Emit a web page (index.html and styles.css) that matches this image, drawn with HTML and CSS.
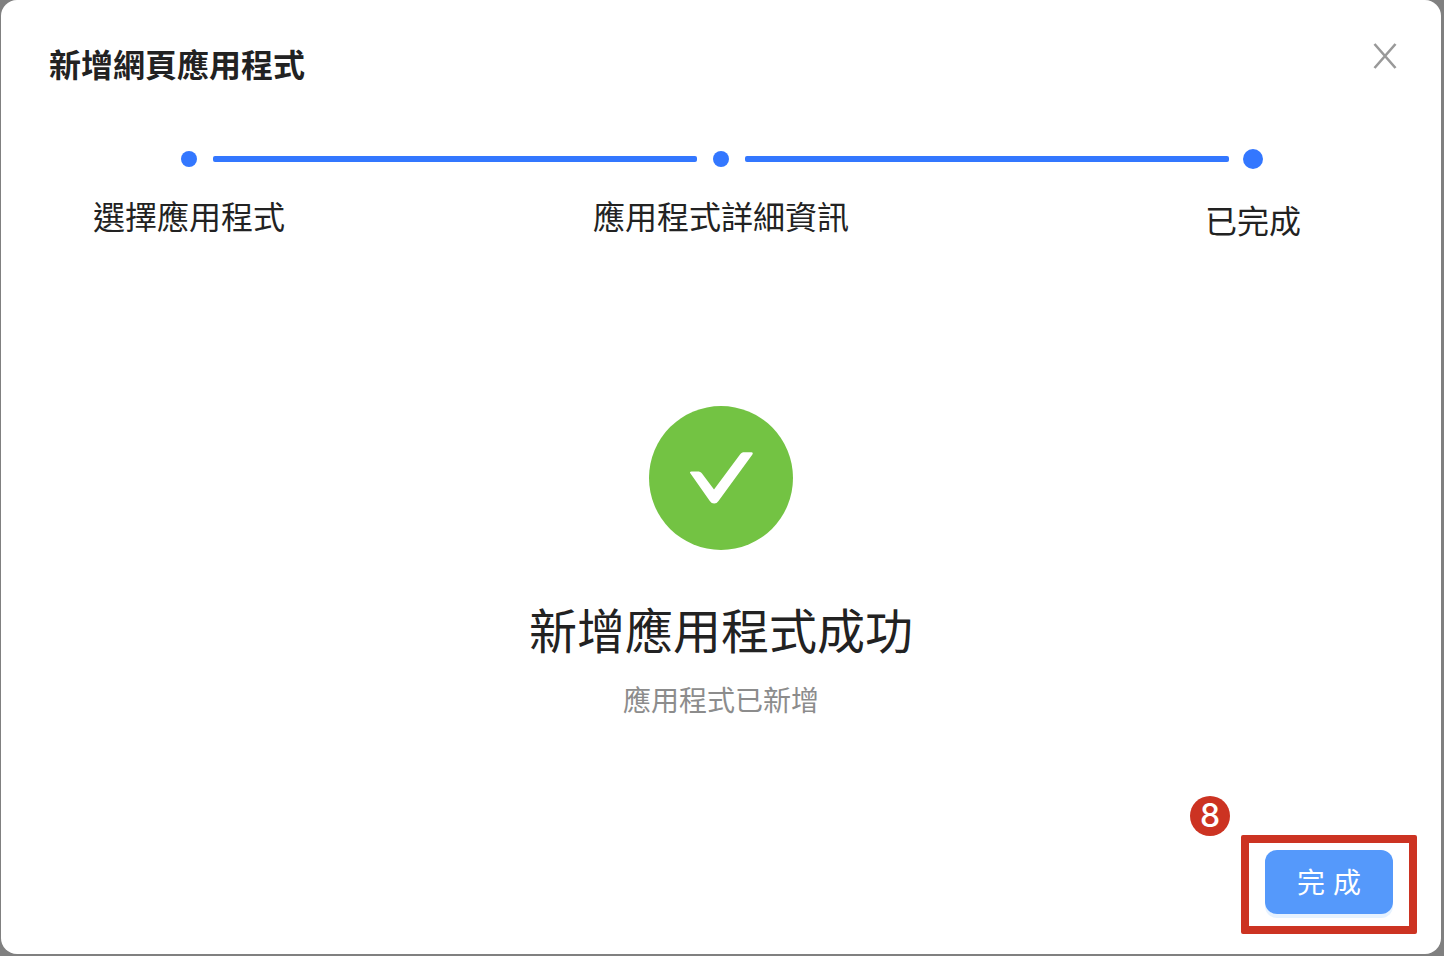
FILE: index.html
```html
<!DOCTYPE html>
<html lang="zh-TW">
<head>
    <meta charset="UTF-8">
    <meta name="viewport" content="width=device-width, initial-scale=1.0">
    <title>新增網頁應用程式</title>
    <link rel="stylesheet" href="styles.css">
</head>
<body>
    <div class="dialog">
        <div class="dialog-header">
            <h1 class="dialog-title">新增網頁應用程式</h1>
            <button class="close-btn" aria-label="關閉">
                <svg width="26" height="26" viewBox="0 0 26 26"><path d="M2.500 1 L23.500 25 M23.500 1 L2.500 25" stroke="#999" stroke-width="2.6" fill="none"/></svg>
            </button>
        </div>

        <div class="steps">
            <div class="step">
                <span class="dot"></span>
                <span class="step-label">選擇應用程式</span>
            </div>
            <span class="line"></span>
            <div class="step">
                <span class="dot"></span>
                <span class="step-label">應用程式詳細資訊</span>
            </div>
            <span class="line"></span>
            <div class="step current">
                <span class="dot"></span>
                <span class="step-label">已完成</span>
            </div>
        </div>

        <div class="result">
            <svg class="result-icon" width="144" height="144" viewBox="0 0 144 144">
                <circle cx="72" cy="72" r="72" fill="#73c343"/>
                <path d="M41.500 67.500 C40.500 66.300 41 65.500 42.500 65.500 L48.500 65.500 C50.500 65.500 51.800 66 53 67.500 L65 83.500 L91 48.500 C92.200 46.900 93.500 46.300 95.500 46.300 L102.500 46.300 C103.800 46.300 104.200 47.300 103.400 48.500 L69.500 95 C68.300 96.700 67 97.500 65.200 97.500 C63.400 97.500 62 96.700 60.800 95 Z" fill="#fff"/>
            </svg>
            <h2 class="result-title">新增應用程式成功</h2>
            <p class="result-text">應用程式已新增</p>
        </div>

        <div class="dialog-footer">
            <button class="done-btn">完成</button>
            <span class="mark-box"></span>
            <span class="mark-badge">8</span>
        </div>
    </div>
</body>
</html>
```

FILE: styles.css
```css
* { box-sizing: border-box; }
html, body { height: 100%; }
body {
    margin: 0;
    padding: 0 3px 2px 1px;
    background: #808080;
    font-family: "Noto Sans CJK TC", "Noto Sans", sans-serif;
    color: #222;
}
.dialog {
    height: 100%;
    background: #fff;
    border-radius: 16px;
    display: flex;
    flex-direction: column;
}
.dialog-header {
    display: flex;
    justify-content: space-between;
    align-items: flex-start;
    padding: 40px 43px 0 48px;
}
.dialog-title {
    margin: 0;
    font-size: 32px;
    line-height: 46px;
    font-weight: 700;
}
.close-btn {
    margin-top: 3px;
    padding: 0;
    width: 26px;
    height: 26px;
    border: none;
    background: none;
}
.close-btn svg { display: block; }
.steps {
    display: flex;
    justify-content: center;
    height: 120px;
    margin-top: 63px;
}
.step {
    width: 48px;
    display: flex;
    flex-direction: column;
    align-items: center;
}
.dot {
    width: 16px;
    height: 16px;
    margin-top: 2px;
    border-radius: 50%;
    background: #3377ff;
}
.current .dot {
    width: 20px;
    height: 20px;
    margin-top: 0;
}
.line {
    width: 484px;
    height: 6px;
    margin-top: 7px;
    border-radius: 2px;
    background: #3377ff;
}
.step-label {
    margin-top: 25px;
    font-size: 32px;
    line-height: 46px;
    white-space: nowrap;
}
.current .step-label { margin-top: 27px; }
.result {
    display: flex;
    flex-direction: column;
    align-items: center;
    margin-top: 137px;
}
.result-icon { display: block; }
.result-title {
    margin: 43px 0 0;
    font-size: 48px;
    line-height: 70px;
    font-weight: 400;
}
.result-text {
    margin: 16px 0 0;
    font-size: 28px;
    line-height: 40px;
    color: #8c8c8c;
}
.dialog-footer {
    position: relative;
    display: flex;
    justify-content: flex-end;
    margin-top: auto;
    padding: 0 48px 40px 0;
}
.done-btn {
    width: 128px;
    height: 64px;
    padding: 0 0 2px;
    border: none;
    border-radius: 12px;
    background: #5599fb;
    box-shadow: 0 4px 0 #e6f2ff;
    color: #fff;
    font-family: inherit;
    font-size: 28px;
    letter-spacing: 8px;
    text-indent: 8px;
}
.mark-box {
    position: absolute;
    right: 24px;
    bottom: 20px;
    width: 176px;
    height: 99px;
    border: 8px solid #cc3322;
    border-radius: 2px;
}
.mark-badge {
    position: absolute;
    right: 211px;
    bottom: 118px;
    width: 40px;
    height: 40px;
    border-radius: 50%;
    background: #cc3322;
    color: #fff;
    font-family: Inter, sans-serif;
    font-size: 32px;
    font-weight: 500;
    line-height: 40px;
    text-align: center;
}
```
